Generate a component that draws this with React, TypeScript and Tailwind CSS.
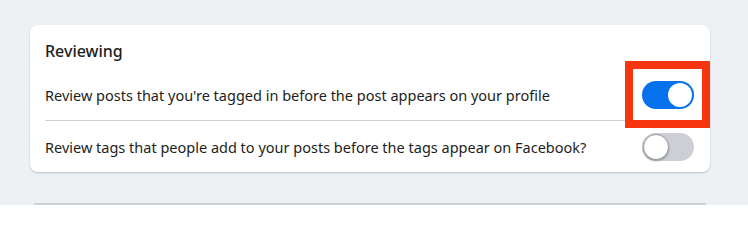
import React from "react";

function Toggle({ on }: { on: boolean }) {
  return on ? (
    <div className="flex h-[28px] w-[52px] shrink-0 items-center justify-end rounded-full bg-[#0571ed] px-[2px]">
      <div className="h-[24px] w-[24px] rounded-full bg-white" />
    </div>
  ) : (
    <div className="flex h-[28px] w-[52px] shrink-0 items-center justify-start rounded-full bg-[#ccd0d5] px-[1px]">
      <div className="h-[26px] w-[26px] rounded-full border border-[#9a9ea3] bg-white shadow-[0_1px_2px_rgba(0,0,0,0.3)]" />
    </div>
  );
}

export default function App() {
  return (
    <div
      className="h-[205px] w-[748px] overflow-hidden bg-[#eef1f4] pl-[30px] pr-[38px] pt-[25px]"
      style={{ fontFamily: '"Noto Sans", "Open Sans", sans-serif' }}
    >
      <div className="relative h-[147px] rounded-[8px] bg-white pl-[15px] pr-[16px] shadow-[0_1px_2px_rgba(0,0,0,0.2)]">
        <div className="h-[37px] pt-[15px] text-[16px] font-medium leading-[22px] text-[#1c1e21]">Reviewing</div>
        <div className="flex h-[59px] items-center justify-between border-b border-[#ced0d4] pt-[8px] text-[14.5px] leading-[20px] text-[#1c1e21]">
          <span>Review posts that you're tagged in before the post appears on your profile</span>
          <Toggle on />
        </div>
        <div className="flex h-[51px] items-center justify-between text-[14.5px] leading-[20px] text-[#1c1e21]">
          <span>Review tags that people add to your posts before the tags appear on Facebook?</span>
          <Toggle on={false} />
        </div>
        <div className="absolute left-[595px] top-[36px] h-[67px] w-[85px] border-[8px] border-[#f5360f]" />
      </div>
      <div className="mx-[4px] mt-[31px] h-[10px] border-t-2 border-[#cdd0d4] bg-[#eef1f4]" />
    </div>
  );
}
